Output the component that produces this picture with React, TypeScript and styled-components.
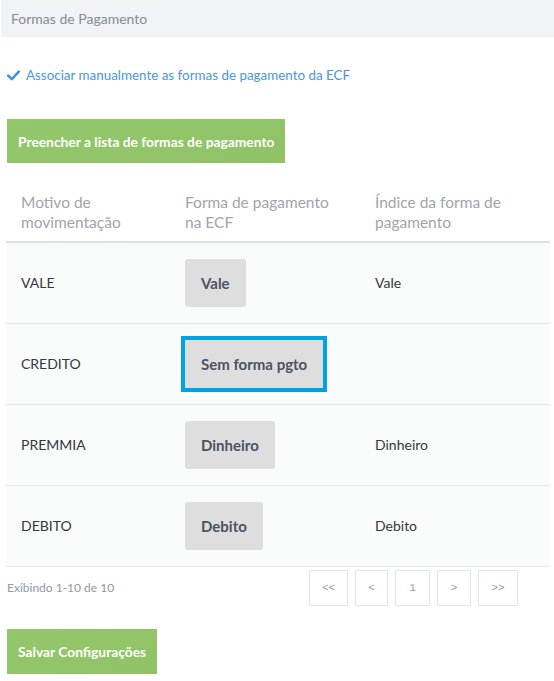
import styled, { createGlobalStyle } from 'styled-components';

const GlobalStyle = createGlobalStyle`
  body {
    margin: 0;
    background: #ffffff;
    font-family: "Source Sans Pro", Lato, "Noto Sans", sans-serif;
  }
`;

const Page = styled.div`
  width: 554px;
`;

const Header = styled.div`
  margin-left: 1px;
  height: 37px;
  line-height: 37px;
  padding-left: 10px;
  background: #f2f3f7;
  color: #858b97;
  font-size: 14px;
`;

const Body = styled.div`
  padding: 0 4px 0 7px;
`;

const CheckRow = styled.label`
  display: flex;
  align-items: center;
  gap: 6px;
  margin-top: 28px;
  height: 20px;
  color: #4a96e0;
  font-size: 13.4px;
`;

const ButtonSlot = styled.div`
  margin-top: ${(p: { $top: number }) => p.$top}px;
`;

const GreenButton = styled.button<{ $h?: number }>`
  display: block;
  height: ${(p) => p.$h ?? 44}px;
  padding: 0 11px;
  border: none;
  border-radius: 0;
  background: linear-gradient(160deg, #94c76c 0%, #92c56a 60%, #8fc267 100%);
  color: #ffffff;
  font-family: inherit;
  font-size: 13.8px;
  font-weight: 700;
  cursor: pointer;
`;

const Table = styled.table`
  width: 544px;
  margin-top: 20px;
  margin-left: -1px;
  border-collapse: collapse;
  table-layout: fixed;
`;

const HeadCell = styled.th<{ $w: number }>`
  width: ${(p) => p.$w}px;
  padding: 9px 15px 9px 15px;
  text-align: left;
  vertical-align: top;
  font-weight: 400;
  font-size: 15.5px;
  line-height: 20px;
  color: #a0a4ad;
  border-bottom: 2px solid #dfe2e3;
`;

const Row = styled.tr`
  height: 81px;
  background: #fafbfb;
  border-bottom: 1px solid #e6e8e8;
`;

const Cell = styled.td`
  padding: 0 15px;
  font-size: 14px;
  color: #333840;
  vertical-align: middle;
`;

const PayButton = styled.button<{ $focused?: boolean }>`
  height: 48px;
  padding: 0 16px;
  border: none;
  border-radius: ${(p) => (p.$focused ? 0 : 3)}px;
  background: #dedede;
  color: #4b5362;
  font-family: inherit;
  font-size: 15px;
  font-weight: 700;
  white-space: nowrap;
  outline: ${(p) => (p.$focused ? '4px solid #00a2e6' : 'none')};
`;

const Footer = styled.div`
  display: grid;
  grid-template-columns: 302px auto;
  align-items: center;
  margin-top: 3px;
`;

const Info = styled.span`
  font-size: 12px;
  color: #8f98a6;
`;

const Pager = styled.div`
  display: flex;
  gap: 7px;
`;

const PageBox = styled.span<{ $w: number }>`
  display: flex;
  align-items: center;
  justify-content: center;
  width: ${(p) => p.$w}px;
  height: 36px;
  box-sizing: border-box;
  border: 1px solid #e3e6e6;
  font-family: "Liberation Mono", monospace;
  font-size: 11px;
  color: #8c9ab8;
`;

const rows = [
  { motivo: 'VALE', forma: 'Vale', indice: 'Vale' },
  { motivo: 'CREDITO', forma: 'Sem forma pgto', indice: '', focused: true },
  { motivo: 'PREMMIA', forma: 'Dinheiro', indice: 'Dinheiro' },
  { motivo: 'DEBITO', forma: 'Debito', indice: 'Debito' },
];

const pages = [
  { label: '<<', w: 39 },
  { label: '<', w: 33 },
  { label: '1', w: 35 },
  { label: '>', w: 34 },
  { label: '>>', w: 40 },
];

export default function App() {
  return (
    <Page>
      <GlobalStyle />
      <Header>Formas de Pagamento</Header>
      <Body>
        <CheckRow>
          <svg width="13" height="11" viewBox="0 0 13 11">
            <path d="M1.2 5.6 L4.8 9.2 L11.8 1.6" fill="none" stroke="#3a8ee0" strokeWidth="2.4" strokeLinecap="round" strokeLinejoin="round" />
          </svg>
          Associar manualmente as formas de pagamento da ECF
        </CheckRow>
        <ButtonSlot $top={34}>
          <GreenButton>Preencher a lista de formas de pagamento</GreenButton>
        </ButtonSlot>
        <Table>
          <thead>
            <tr>
              <HeadCell $w={134}>Motivo de movimentação</HeadCell>
              <HeadCell $w={160}>Forma de pagamento na ECF</HeadCell>
              <HeadCell $w={160}>Índice da forma de pagamento</HeadCell>
            </tr>
          </thead>
          <tbody>
            {rows.map((r) => (
              <Row key={r.motivo}>
                <Cell>{r.motivo}</Cell>
                <Cell>
                  <PayButton $focused={r.focused}>{r.forma}</PayButton>
                </Cell>
                <Cell>{r.indice}</Cell>
              </Row>
            ))}
          </tbody>
        </Table>
        <Footer>
          <Info>Exibindo 1-10 de 10</Info>
          <Pager>
            {pages.map((p) => (
              <PageBox key={p.label} $w={p.w}>{p.label}</PageBox>
            ))}
          </Pager>
        </Footer>
        <ButtonSlot $top={23}>
          <GreenButton $h={45}>Salvar Configurações</GreenButton>
        </ButtonSlot>
      </Body>
    </Page>
  );
}
